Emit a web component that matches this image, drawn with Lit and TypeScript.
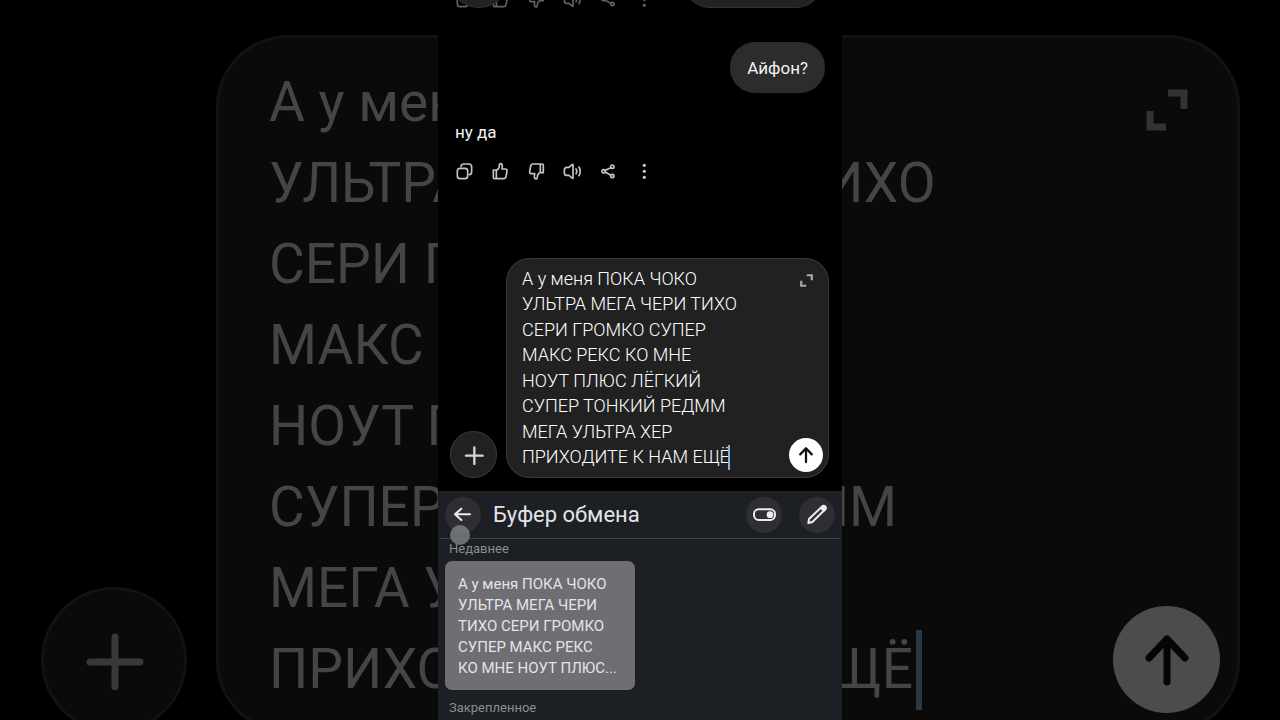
import { LitElement, html, css, svg } from "lit";
import { customElement, property } from "lit/decorators.js";

const MESSAGE = [
  "А у меня ПОКА ЧОКО",
  "УЛЬТРА МЕГА ЧЕРИ ТИХО",
  "СЕРИ ГРОМКО СУПЕР",
  "МАКС РЕКС КО МНЕ",
  "НОУТ ПЛЮС ЛЁГКИЙ",
  "СУПЕР ТОНКИЙ РЕДММ",
  "МЕГА УЛЬТРА ХЕР",
  "ПРИХОДИТЕ К НАМ ЕЩЁ",
];

const CLIP = [
  "А у меня ПОКА ЧОКО",
  "УЛЬТРА МЕГА ЧЕРИ",
  "ТИХО СЕРИ ГРОМКО",
  "СУПЕР МАКС РЕКС",
  "КО МНЕ НОУТ ПЛЮС...",
];

const ACTIONS = [
  {
    name: "Копировать",
    art: svg`<rect x="6" y="18" width="31" height="31" rx="8"/><path d="M17 12q1-7 9-7h14q9 0 9 9v14q0 8-7 9"/>`,
  },
  {
    name: "Нравится",
    art: svg`<path d="M6 23h9v26h-5q-4 0-4-4zM15 25l7-7q2-3 2-8 0-6 4-6 5 0 5 8l-1 8h9q7 0 6 7l-3 16q-1 6-7 6h-22"/>`,
  },
  {
    name: "Не нравится",
    art: svg`<path d="M48 31h-9v-26h5q4 0 4 4zM39 29l-7 7q-2 3-2 8 0 6-4 6-5 0-5-8l1-8h-9q-7 0-6-7l3-16q1-6 7-6h22"/>`,
  },
  {
    name: "Озвучить",
    art: svg`<path d="M26 7q3-3 3 1v38q0 4-3 1l-9-8h-6q-8 0-8-8v-8q0-8 8-8h6zM38 20q5 7 0 14M47 14q7 13 0 26"/>`,
  },
  {
    name: "Поделиться",
    art: svg`<circle cx="13" cy="27" r="5"/><circle cx="39" cy="13" r="5"/><circle cx="39" cy="41" r="5"/><path d="M18 24l16-8M18 30l16 8"/>`,
  },
  {
    name: "Ещё",
    art: svg`<g fill="currentColor" stroke="none"><circle cx="27" cy="9" r="5"/><circle cx="27" cy="27" r="5"/><circle cx="27" cy="45" r="5"/></g>`,
  },
];

@customElement("message-actions")
class MessageActions extends LitElement {
  static styles = css`
    :host { display: flex; gap: 18px; color: #c4c4c4; }
    .action { display: block; width: 18px; height: 18px; padding: 0; border: 0; background: none; color: inherit; }
    .glyph { display: block; width: 18px; height: 18px; fill: none; stroke: currentColor; stroke-width: 5; stroke-linejoin: round; stroke-linecap: round; }
  `;
  render() {
    return ACTIONS.map(
      (a) => html`<button class="action" aria-label=${a.name}><svg class="glyph" viewBox="-1 -1 54 54">${a.art}</svg></button>`
    );
  }
}

@customElement("message-composer")
class MessageComposer extends LitElement {
  @property({ type: Boolean, reflect: true }) large = false;

  static styles = css`
    :host {
      --gap: 9px; --add: 47px; --add-icon: 20px; --radius: 24px; --line: 1px;
      --pad-x: 16px; --pad-top: 8px; --pad-bottom: 8px; --font: 18px; --weight: 300; --leading: 1.42;
      --side: 6px; --send: 34px; --send-icon: 18px; --expand: 13px; --expand-top: 16px;
      --caret-x: 206px; --caret-w: 2px; --caret-h: 25px;
      --surface: #212121; --edge: #363636; --ink: #fff; --soft: #d6d6d6; --dim: #aaa;
      --send-bg: #fff; --send-ink: #111; --caret: #86b0d6;
      display: flex; align-items: flex-end; gap: var(--gap);
    }
    :host([large]) {
      --gap: 29px; --add: 146px; --add-icon: 60px; --radius: 72px; --line: 3px;
      --pad-x: 53px; --pad-top: 27px; --pad-bottom: 23px; --font: 55px; --weight: 400; --leading: 81px;
      --side: 20px; --send: 107px; --send-icon: 56px; --expand: 42px; --expand-top: 54px;
      --caret-x: 647px; --caret-w: 6px; --caret-h: 80px;
      --surface: #0a0a0a; --edge: #121212; --ink: #454545; --soft: #383838; --dim: #333;
      --send-bg: #4c4c4c; --send-ink: #050505; --caret: #2b3945;
    }
    .round { display: grid; place-items: center; flex: none; box-sizing: border-box; padding: 0; border: 0; border-radius: 50%; }
    .add { width: var(--add); height: var(--add); background: var(--surface); box-shadow: inset 0 0 0 var(--line) var(--edge); color: var(--soft); }
    .add-icon { width: var(--add-icon); height: var(--add-icon); }
    .bubble { display: grid; grid-template-columns: 1fr auto; flex: 1; min-width: 0; border-radius: var(--radius); background: var(--surface); box-shadow: inset 0 0 0 var(--line) var(--edge); }
    .field { position: relative; display: grid; padding: var(--pad-top) 0 var(--pad-bottom) var(--pad-x); min-width: 0; }
    .text {
      display: block; width: 100%; min-width: 0; margin: 0; padding: 0; border: 0; outline: 0; resize: none; overflow: hidden;
      background: none; color: var(--ink); white-space: pre;
      font-family: var(--ui-font); font-size: var(--font); font-weight: var(--weight); line-height: var(--leading);
    }
    .caret { position: absolute; left: calc(var(--pad-x) + var(--caret-x)); bottom: var(--pad-bottom); width: var(--caret-w); height: var(--caret-h); background: var(--caret); }
    .tools { display: flex; flex-direction: column; align-items: center; justify-content: space-between; padding: var(--expand-top) var(--side) var(--side) 0; }
    .expand { display: block; padding: 0; border: 0; background: none; color: var(--dim); }
    .expand-icon { display: block; width: var(--expand); height: var(--expand); }
    .send { width: var(--send); height: var(--send); background: var(--send-bg); color: var(--send-ink); }
    .send-icon { width: var(--send-icon); height: var(--send-icon); }
    .stroke { fill: none; stroke: currentColor; stroke-linecap: round; stroke-linejoin: round; }
  `;

  render() {
    return html`
      <button class="round add" aria-label="Добавить">
        <svg class="add-icon stroke" viewBox="0 0 60 60"><path stroke-width="7" d="M31 7v50M6 32h50"/></svg>
      </button>
      <div class="bubble">
        <div class="field">
          <textarea class="text" rows="8" aria-label="Сообщение" spellcheck="false" .value=${MESSAGE.join("\n")}></textarea>
          <span class="caret"></span>
        </div>
        <div class="tools">
          <button class="expand" aria-label="Развернуть">
            <svg class="expand-icon stroke" viewBox="0 0 42 42"><path stroke-width="7" stroke-linecap="butt" stroke-linejoin="miter" d="M22 4h16v16M4 22v16h16"/></svg>
          </button>
          <button class="round send" aria-label="Отправить">
            <svg class="send-icon stroke" viewBox="0 0 56 56"><path stroke-width="7" d="M28 50V7M10 26L28 7l18 19"/></svg>
          </button>
        </div>
      </div>
    `;
  }
}

@customElement("clipboard-panel")
class ClipboardPanel extends LitElement {
  static styles = css`
    :host { display: block; background: #1c1f24; color: #e6e6ea; font-family: var(--ui-font); }
    .head { position: relative; display: flex; align-items: center; gap: 12px; height: 47px; margin: 0 2px; padding: 0 5px; border-bottom: 1px solid #44464b; }
    .title { flex: 1; margin: 0; font-size: 22px; font-weight: 400; line-height: 30px; color: #e2e3e7; }
    .tool { display: grid; place-items: center; width: 36px; height: 36px; padding: 0; border: 0; border-radius: 50%; background: #2e2e34; color: #ececf0; }
    .tools { display: flex; gap: 17px; }
    .icon { width: 26px; height: 26px; fill: none; stroke: currentColor; stroke-width: 6; stroke-linecap: round; stroke-linejoin: round; }
    .touch { position: absolute; left: 10px; top: 34px; width: 20px; height: 20px; border-radius: 50%; background: #7b7c80; opacity: 0.85; }
    .label { margin: 0; padding: 0 11px; font-size: 13px; font-weight: 400; line-height: 20px; color: #8b8d92; }
    .clip { display: block; width: 190px; margin: 2px 7px 8px; padding: 13px 0 11px 13px; border: 0; border-radius: 7px; background: #6f6e73; color: #e4e3e8; text-align: left; font-family: inherit; font-size: 15px; line-height: 21px; }
    .line { display: block; white-space: nowrap; }
  `;
  render() {
    return html`
      <header class="head">
        <button class="tool" aria-label="Назад"><svg class="icon" viewBox="0 0 78 78"><path d="M60 37H15M34 20L15 37l19 17"/></svg></button>
        <h2 class="title">Буфер обмена</h2>
        <div class="tools">
          <button class="tool" aria-label="Включить"><svg class="icon" viewBox="0 0 78 78"><rect x="9" y="22" width="63" height="32" rx="14"/><circle cx="57" cy="38" r="10" fill="currentColor" stroke="none"/></svg></button>
          <button class="tool" aria-label="Изменить"><svg class="icon" viewBox="0 0 78 78"><path d="M13 63l2-12L55 13q4-3 8 0t1 9L25 60z"/><path fill="currentColor" d="M53 16q6-6 10-2t-1 10l-3 2-8-8z"/></svg></button>
        </div>
        <span class="touch"></span>
      </header>
      <h3 class="label">Недавнее</h3>
      <button class="clip">${CLIP.map((l) => html`<span class="line">${l}</span>`)}</button>
      <h3 class="label">Закрепленное</h3>
    `;
  }
}

@customElement("app-root")
class AppRoot extends LitElement {
  static styles = css`
    :host { --ui-font: "Roboto", "Noto Sans", sans-serif; position: relative; display: block; height: 100vh; overflow: hidden; background: #000; color: #f2f2f2; font-family: var(--ui-font); }
    .backdrop { position: absolute; inset: auto 40px -13px 41px; }
    .phone { position: relative; display: flex; flex-direction: column; width: min(100%, 404px); height: 100%; margin: 0 auto; background: #000; }
    .previous { position: relative; display: flex; align-items: flex-end; flex: none; height: 8px; padding: 0 17px; overflow: hidden; }
    .faded { opacity: 0.5; }
    .ghost { position: absolute; bottom: 0; box-sizing: border-box; border: 1px solid #333; background: #222; }
    .ghost-add { left: 10px; width: 62px; height: 62px; border-radius: 50%; }
    .ghost-field { right: 18px; width: 142px; height: 60px; border-radius: 28px; }
    .thread { display: flex; flex: 1; flex-direction: column; min-height: 0; padding: 34px 17px 0; }
    .asked { align-self: flex-end; padding: 14px 17px 12px; border-radius: 25px; background: #2c2c2c; font-size: 17px; line-height: 25px; }
    .reply { margin: 26px 0 17px; font-size: 17px; line-height: 26px; }
    .composer { flex: none; margin: 0 13px 13px 12px; }
    .clipboard { flex: none; height: 229px; overflow: hidden; }
  `;
  render() {
    return html`
      <message-composer class="backdrop" large inert aria-hidden="true"></message-composer>
      <main class="phone">
        <div class="previous">
          <message-actions class="faded"></message-actions>
          <span class="ghost ghost-add"></span>
          <span class="ghost ghost-field"></span>
        </div>
        <section class="thread">
          <div class="asked">Айфон?</div>
          <p class="reply">ну да</p>
          <message-actions></message-actions>
        </section>
        <message-composer class="composer"></message-composer>
        <clipboard-panel class="clipboard"></clipboard-panel>
      </main>
    `;
  }
}
